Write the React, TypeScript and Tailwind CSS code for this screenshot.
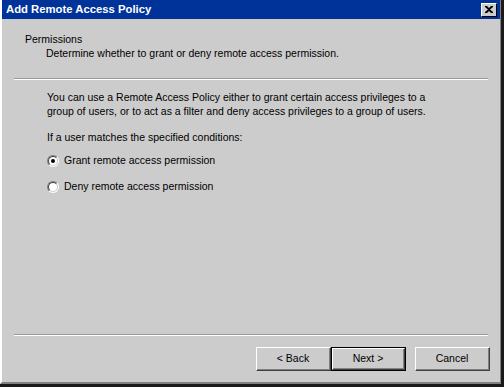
import React, { useState } from 'react';

const font = { fontFamily: '"Liberation Sans", Arial, sans-serif' };

const Radio: React.FC<{ checked: boolean; label: string; onClick: () => void }> = ({ checked, label, onClick }) => (
    <div className="flex items-center h-[13px] cursor-default" onClick={onClick}>
        <div className="relative w-[12px] h-[12px] rounded-full border border-t-[#808080] border-l-[#808080] border-b-white border-r-white">
            <div className="w-full h-full rounded-full bg-white border border-t-[#404040] border-l-[#404040] border-b-[#d4d0c8] border-r-[#d4d0c8] flex items-center justify-center">
                {checked && <div className="w-[4px] h-[4px] rounded-full bg-black" />}
            </div>
        </div>
        <span className="ml-[5px] text-[10.5px] leading-[13px]">{label}</span>
    </div>
);

const Button: React.FC<{ label: string; isDefault?: boolean }> = ({ label, isDefault }) => (
    <div className={`w-[75px] h-[24px] ${isDefault ? 'border border-black' : ''}`}>
        <div className="w-full h-full flex border border-t-white border-l-white border-b-[#404040] border-r-[#404040]">
            <div className="flex-1 flex items-center justify-center border-b border-r border-[#808080] text-[10.5px]">
                {label}
            </div>
        </div>
    </div>
);

export default function App() {
    const [grant, setGrant] = useState(true);

    return (
        <div className="w-[504px] h-[387px] bg-[#1a1a1a] overflow-hidden" style={font}>
            <div className="w-[501px] h-[384px] flex flex-col bg-[#cccccc] border-l-2 border-l-white border-r border-r-[#808080] border-b-2 border-b-[#808080] text-black">
                {/* title bar */}
                <div className="h-[19px] flex items-center justify-between bg-[#003399] pl-[4px] pr-[3px]">
                    <span className="text-white font-bold text-[11.3px] leading-none">Add Remote Access Policy</span>
                    <div className="w-[16px] h-[14px] bg-[#cccccc] border border-t-white border-l-white border-b-black border-r-black flex items-center justify-center">
                        <svg width="8" height="7" viewBox="0 0 8 7">
                            <path d="M0 0h2l2 2 2-2h2v1L5 3.5 8 6v1H6L4 5 2 7H0V6l3-2.5L0 1z" fill="#000" />
                        </svg>
                    </div>
                </div>

                {/* header */}
                <div className="h-[59px] pt-[13px] pl-[23px] text-[10.5px] leading-[14px]">
                    <div>Permissions</div>
                    <div className="pl-[21px]">Determine whether to grant or deny remote access permission.</div>
                </div>
                <div className="mx-[12px] border-t border-t-[#999999] border-b border-b-white" />

                {/* body */}
                <div className="flex-1 pt-[10px] pl-[45px] text-[10.5px] leading-[14px]">
                    <p>
                        You can use a Remote Access Policy either to grant certain access privileges to a
                        <br />
                        group of users, or to act as a filter and deny access privileges to a group of users.
                    </p>
                    <p className="mt-[12px]">If a user matches the specified conditions:</p>
                    <div className="mt-[10px] flex flex-col gap-[13px]">
                        <Radio checked={grant} label="Grant remote access permission" onClick={() => setGrant(true)} />
                        <Radio checked={!grant} label="Deny remote access permission" onClick={() => setGrant(false)} />
                    </div>
                </div>

                <div className="mx-[12px] border-t border-t-[#999999] border-b border-b-white" />

                {/* buttons */}
                <div className="h-[46px] flex items-start justify-end pt-[11px] pr-[10px]">
                    <Button label="< Back" />
                    <Button label="Next >" isDefault />
                    <div className="w-[9px]" />
                    <Button label="Cancel" />
                </div>
            </div>
        </div>
    );
}
